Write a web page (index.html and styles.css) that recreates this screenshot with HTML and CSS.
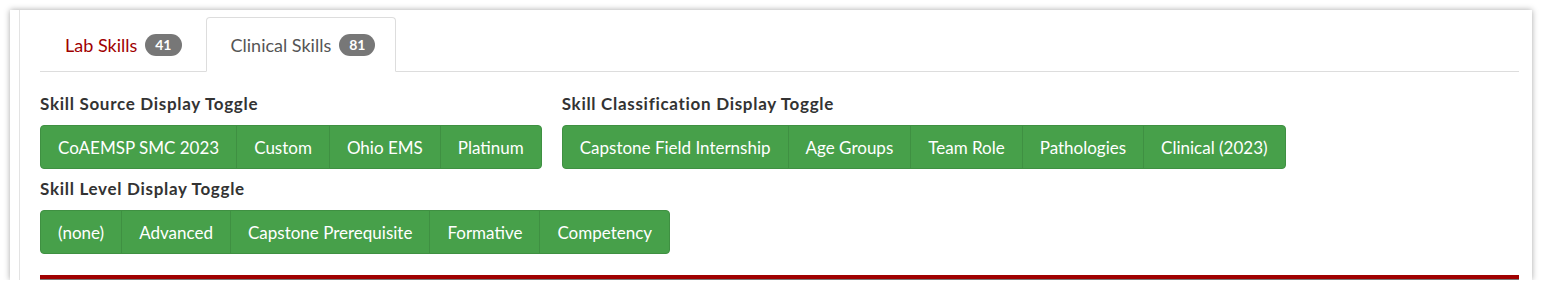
FILE: index.html
```html
<!DOCTYPE html>
<html>
<head>
<meta charset="utf-8">
<link rel="stylesheet" href="styles.css">
</head>
<body>
<div class="window">
  <div class="rail"></div>
  <div class="content">
    <ul class="tabs">
      <li class="tab"><span class="tab-label red">Lab Skills</span><span class="badge">41</span></li>
      <li class="tab active"><span class="tab-label">Clinical Skills</span><span class="badge">81</span></li>
    </ul>
    <div class="toggles">
      <div class="group">
        <h4 class="group-title">Skill Source Display Toggle</h4>
        <div class="btn-group">
          <button class="btn">CoAEMSP SMC 2023</button><button class="btn">Custom</button><button class="btn">Ohio EMS</button><button class="btn">Platinum</button>
        </div>
      </div>
      <div class="group">
        <h4 class="group-title">Skill Classification Display Toggle</h4>
        <div class="btn-group">
          <button class="btn">Capstone Field Internship</button><button class="btn">Age Groups</button><button class="btn">Team Role</button><button class="btn">Pathologies</button><button class="btn">Clinical (2023)</button>
        </div>
      </div>
      <div class="group group-wrap">
        <h4 class="group-title">Skill Level Display Toggle</h4>
        <div class="btn-group">
          <button class="btn">(none)</button><button class="btn">Advanced</button><button class="btn">Capstone Prerequisite</button><button class="btn">Formative</button><button class="btn">Competency</button>
        </div>
      </div>
    </div>
    <div class="table-head"></div>
  </div>
</div>
</body>
</html>
```

FILE: styles.css
```css
* { box-sizing: border-box; }
html, body { margin: 0; padding: 0; background: #ffffff; }
body {
  padding: 10px 10px 0 10px;
  font-family: "Lato", "Open Sans", sans-serif;
  color: #333;
}
.window {
  display: flex;
  width: 1522px;
  height: 270px;
  background: #fff;
  box-shadow: 0 0 6px rgba(0,0,0,0.35);
  overflow: hidden;
}
.rail {
  width: 10px;
  flex: none;
  border-right: 1px solid #e3e3e3;
}
.content {
  flex: 1;
  padding: 7px 13px 0 20px;
  display: flex;
  flex-direction: column;
}
.tabs {
  list-style: none;
  margin: 0;
  padding: 0;
  display: flex;
  gap: 3px;
  border-bottom: 1px solid #ddd;
}
.tab {
  display: flex;
  align-items: center;
  gap: 8px;
  height: 55px;
  padding: 0 20px 0 24px;
  margin-bottom: -1px;
  border: 1px solid transparent;
  border-radius: 4px 4px 0 0;
  font-size: 18px;
  color: #555;
}
.tab.active {
  background: #fff;
  border-color: #ddd;
  border-bottom-color: #fff;
}
.red { color: #a00000; }
.badge {
  display: inline-block;
  background: #777;
  color: #fff;
  font-weight: 700;
  font-size: 14px;
  line-height: 22px;
  height: 22px;
  padding: 0 10px;
  border-radius: 11px;
}
.toggles {
  display: flex;
  flex-wrap: wrap;
  column-gap: 20px;
  margin-top: 20px;
}
.group { display: flex; flex-direction: column; }
.group-title {
  margin: 0 0 9px 0;
  font-size: 17px;
  line-height: 24px;
  font-weight: 700;
  letter-spacing: 0.7px;
  color: #333;
}
.group-wrap .group-title { margin-top: 8px; }
.btn-group { display: flex; }
.btn {
  height: 44px;
  padding: 0 17px;
  font-family: inherit;
  font-size: 17px;
  color: #fff;
  background: #47a04a;
  border: 1px solid #3f9042;
  border-radius: 0;
  margin-left: -1px;
}
.btn:first-child { border-radius: 4px 0 0 4px; margin-left: 0; }
.btn:last-child { border-radius: 0 4px 4px 0; }
.table-head {
  margin-top: 21px;
  height: 6px;
  border-top: 4px solid #a00000;
  background: #7a7a7a;
}
```
